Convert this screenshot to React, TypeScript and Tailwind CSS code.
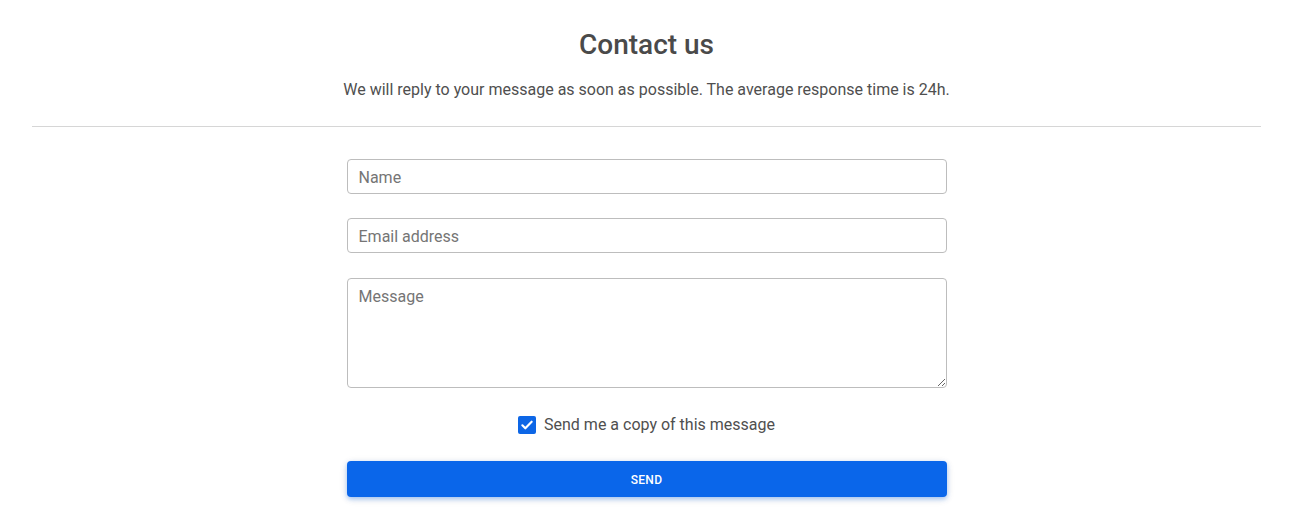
import React from 'react';

const font = { fontFamily: 'Roboto, "Liberation Sans", sans-serif' };

export default function App() {
  return (
    <div className="min-h-[530px] w-full bg-white pr-[4px] pt-[28px] text-[#4f4f4f]" style={font}>
      <h1 className="text-center text-[28px] font-medium leading-[34px] text-[#4a4a4a]">Contact us</h1>
      <p className="mt-[16px] text-center text-[16px] leading-[24px] text-[#4f4f4f]">
        We will reply to your message as soon as possible. The average response time is 24h.
      </p>

      <div className="mx-[32px] mt-[24px] h-px bg-[#d6d6d6]" />

      <form className="mx-auto mt-[32px] flex w-[600px] flex-col" onSubmit={(e) => e.preventDefault()}>
        <input
          type="text"
          placeholder="Name"
          className="h-[35px] w-full rounded-[4px] border border-[#bdbdbd] bg-white px-[11px] pt-[2px] text-[16px] text-[#4f4f4f] outline-none placeholder:text-[#757575]"
        />
        <input
          type="email"
          placeholder="Email address"
          className="mt-[24px] h-[35px] w-full rounded-[4px] border border-[#bdbdbd] bg-white px-[11px] pt-[2px] text-[16px] text-[#4f4f4f] outline-none placeholder:text-[#757575]"
        />
        <textarea
          placeholder="Message"
          className="mt-[25px] h-[110px] w-full rounded-[4px] border border-[#bdbdbd] bg-white px-[11px] py-[6px] text-[16px] leading-[24px] text-[#4f4f4f] outline-none placeholder:text-[#757575]"
        />

        <label className="mt-[25px] flex h-[24px] items-center justify-center gap-[8px] text-[16px] text-[#4f4f4f]">
          <span className="flex h-[18px] w-[18px] items-center justify-center rounded-[2px] bg-[#0d66e6]">
            <svg viewBox="0 0 24 24" className="h-[16px] w-[16px]" fill="none" stroke="white" strokeWidth="3.2" strokeLinecap="round" strokeLinejoin="round">
              <path d="M5 12.5l4.5 4.5L19 7" />
            </svg>
          </span>
          Send me a copy of this message
        </label>

        <button
          type="submit"
          className="mt-[24px] h-[36px] w-full rounded-[4px] bg-[#0a66ea] pt-[2px] text-[12px] font-medium uppercase tracking-[0.3px] text-white shadow-[0_2px_5px_0_rgba(10,102,234,0.35),0_2px_10px_0_rgba(0,0,0,0.08)]"
        >
          Send
        </button>
      </form>
    </div>
  );
}
